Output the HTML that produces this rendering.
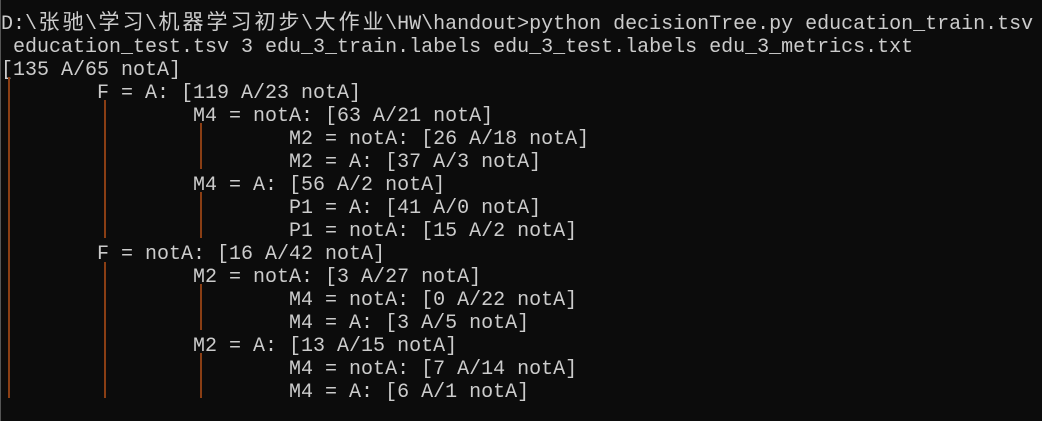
<!DOCTYPE html>
<html><head><meta charset="utf-8"><style>
body{margin:0;width:1042px;height:421px;background:#0c0c0c;overflow:hidden;position:relative;border-left:1px solid #555;box-sizing:border-box}
pre{margin:0;position:absolute;left:0px;top:10px;font-family:"Liberation Mono",monospace;font-size:20px;line-height:23px;color:#cccccc;white-space:pre}
.c{display:inline-block;width:24px;text-align:center;font-family:"Noto Sans CJK SC",sans-serif;font-size:21px}
.v{position:absolute;width:2px;background:#8a3e14}
</style></head><body>
<pre>D:\<span class="c">张</span><span class="c">驰</span>\<span class="c">学</span><span class="c">习</span>\<span class="c">机</span><span class="c">器</span><span class="c">学</span><span class="c">习</span><span class="c">初</span><span class="c">步</span>\<span class="c">大</span><span class="c">作</span><span class="c">业</span>\HW\handout>python decisionTree.py education_train.tsv
 education_test.tsv 3 edu_3_train.labels edu_3_test.labels edu_3_metrics.txt
[135 A/65 notA]
        F = A: [119 A/23 notA]
                M4 = notA: [63 A/21 notA]
                        M2 = notA: [26 A/18 notA]
                        M2 = A: [37 A/3 notA]
                M4 = A: [56 A/2 notA]
                        P1 = A: [41 A/0 notA]
                        P1 = notA: [15 A/2 notA]
        F = notA: [16 A/42 notA]
                M2 = notA: [3 A/27 notA]
                        M4 = notA: [0 A/22 notA]
                        M4 = A: [3 A/5 notA]
                M2 = A: [13 A/15 notA]
                        M4 = notA: [7 A/14 notA]
                        M4 = A: [6 A/1 notA]</pre>
<div class="v" style="left:7px;top:77px;height:321px"></div>
<div class="v" style="left:103px;top:100px;height:138px"></div>
<div class="v" style="left:103px;top:262px;height:136px"></div>
<div class="v" style="left:199px;top:123px;height:46px"></div>
<div class="v" style="left:199px;top:192px;height:46px"></div>
<div class="v" style="left:199px;top:284px;height:46px"></div>
<div class="v" style="left:199px;top:353px;height:45px"></div>
</body></html>
